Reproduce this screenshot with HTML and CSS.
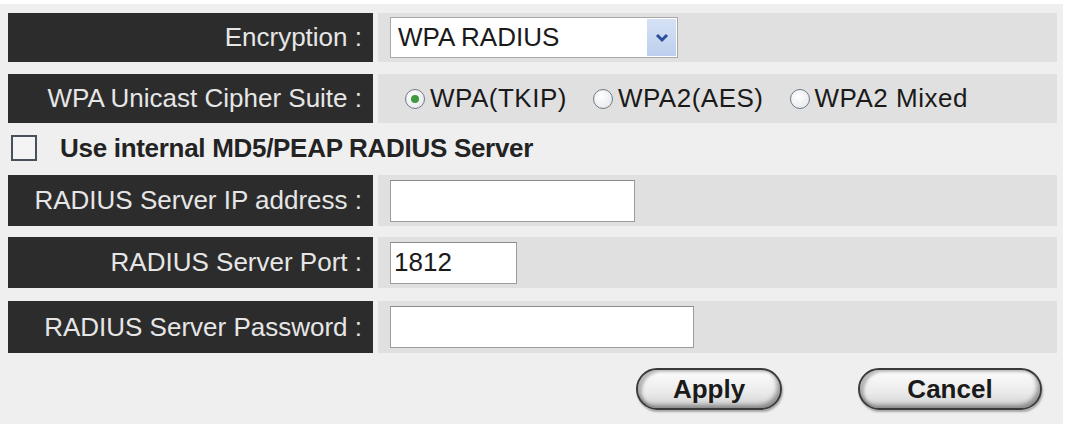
FILE: index.html
```html
<!DOCTYPE html>
<html>
<head>
<meta charset="utf-8">
<link rel="stylesheet" href="styles.css">
</head>
<body>
<div class="page">
  <div class="form">
    <div class="row r1">
      <div class="label">Encryption :</div>
      <div class="value">
        <div class="select">
          <span class="sel-text">WPA RADIUS</span>
          <span class="sel-btn">
            <svg width="14" height="10" viewBox="0 0 14 10"><path d="M2 2 L7 7 L12 2" fill="none" stroke="#2a4f9a" stroke-width="3"/></svg>
          </span>
        </div>
      </div>
    </div>
    <div class="row r2">
      <div class="label">WPA Unicast Cipher Suite :</div>
      <div class="value radios">
        <span class="radio on"><span class="dot"></span></span><span class="rtext">WPA(TKIP)</span>
        <span class="radio"></span><span class="rtext">WPA2(AES)</span>
        <span class="radio"></span><span class="rtext">WPA2 Mixed</span>
      </div>
    </div>
    <div class="check-row">
      <span class="checkbox"></span>
      <span class="check-text">Use internal MD5/PEAP RADIUS Server</span>
    </div>
    <div class="row r3">
      <div class="label">RADIUS Server IP address :</div>
      <div class="value"><div class="input w-ip"></div></div>
    </div>
    <div class="row r4">
      <div class="label">RADIUS Server Port :</div>
      <div class="value"><div class="input w-port">1812</div></div>
    </div>
    <div class="row r5">
      <div class="label">RADIUS Server Password :</div>
      <div class="value"><div class="input w-pw"></div></div>
    </div>
    <div class="buttons">
      <div class="btn apply">Apply</div>
      <div class="btn cancel">Cancel</div>
    </div>
  </div>
</div>
</body>
</html>
```

FILE: styles.css
```css
html, body {
  margin: 0;
  padding: 0;
  background: #ffffff;
}
body {
  width: 1067px;
  height: 426px;
  overflow: hidden;
  font-family: "Liberation Sans", Arial, sans-serif;
}
.page {
  width: 1063px;
  height: 420px;
  background: #efefef;
  margin-top: 4px;
  box-sizing: border-box;
  padding-top: 9px;
}
.form {
  padding: 0 6px 0 8px;
}
.row {
  display: flex;
  gap: 5px;
  height: 49px;
}
.r1 { margin-bottom: 12px; }
.r2 { margin-bottom: 0; }
.r3 { height: 51px; margin-bottom: 11px; }
.r4 { height: 51px; margin-bottom: 13px; }
.r5 { height: 52px; }
.label {
  width: 365px;
  flex: none;
  background: #2c2c2c;
  color: #e6e6e6;
  font-size: 26px;
  text-align: right;
  box-sizing: border-box;
  padding-right: 11px;
  display: flex;
  align-items: center;
  justify-content: flex-end;
  white-space: nowrap;
}
.value {
  width: 679px;
  flex: none;
  background: #e0e0e0;
  display: flex;
  align-items: center;
  padding-left: 12px;
  box-sizing: border-box;
}
.select {
  width: 288px;
  height: 41px;
  box-sizing: border-box;
  border: 1px solid #a8a8a8;
  background: #fff;
  display: flex;
  align-items: center;
  justify-content: space-between;
}
.sel-text {
  font-size: 26px;
  color: #1a1a1a;
  padding-left: 7px;
}
.sel-btn {
  width: 29px;
  height: 37px;
  margin-right: 1px;
  background: linear-gradient(#d6e2f5, #bccfee);
  display: flex;
  align-items: center;
  justify-content: center;
}
.radios {
  padding-left: 27px;
  font-size: 26px;
  color: #1a1a1a;
}
.radio {
  width: 18px;
  height: 18px;
  border: 1px solid #6f7a84;
  border-radius: 50%;
  background: radial-gradient(circle at 40% 35%, #ffffff, #e0e3e8);
  display: inline-flex;
  align-items: center;
  justify-content: center;
  margin-right: 5px;
  flex: none;
}
.radio .dot {
  width: 8px;
  height: 8px;
  border-radius: 50%;
  background: #3f9a3f;
}
.rtext {
  margin-right: 26px;
  letter-spacing: 0.5px;
}
.check-row {
  height: 52px;
  display: flex;
  align-items: center;
  padding-left: 3px;
}
.checkbox {
  width: 22px;
  height: 22px;
  border: 2px solid #4a5058;
  background: #f4f4f4;
  flex: none;
  margin-top: -2px;
}
.check-text {
  font-weight: bold;
  font-size: 26px;
  color: #232323;
  margin-left: 23px;
  margin-top: -2px;
  letter-spacing: -0.3px;
}
.input {
  height: 42px;
  box-sizing: border-box;
  border: 1px solid #9c9c9c;
  border-top-color: #8a8a8a;
  background: #fff;
  font-size: 26px;
  color: #1a1a1a;
  display: flex;
  align-items: center;
  padding-left: 3px;
}
.w-ip { width: 245px; }
.w-port { width: 127px; }
.w-pw { width: 304px; }
.buttons {
  display: flex;
  justify-content: flex-end;
  gap: 76px;
  padding-top: 15px;
  padding-right: 15px;
}
.btn {
  height: 42px;
  box-sizing: border-box;
  border: 2px solid #3a3a3a;
  border-radius: 22px;
  background: linear-gradient(#fdfdfd, #eaeaea 60%, #cfcfcf);
  box-shadow: inset -3px -3px 4px rgba(0,0,0,0.35), inset 4px 2px 3px rgba(0,0,0,0.25), 1px 2px 2px rgba(0,0,0,0.3);
  font-weight: bold;
  font-size: 26px;
  color: #1a1a1a;
  display: flex;
  align-items: center;
  justify-content: center;
}
.apply { width: 146px; }
.cancel { width: 184px; }
```
